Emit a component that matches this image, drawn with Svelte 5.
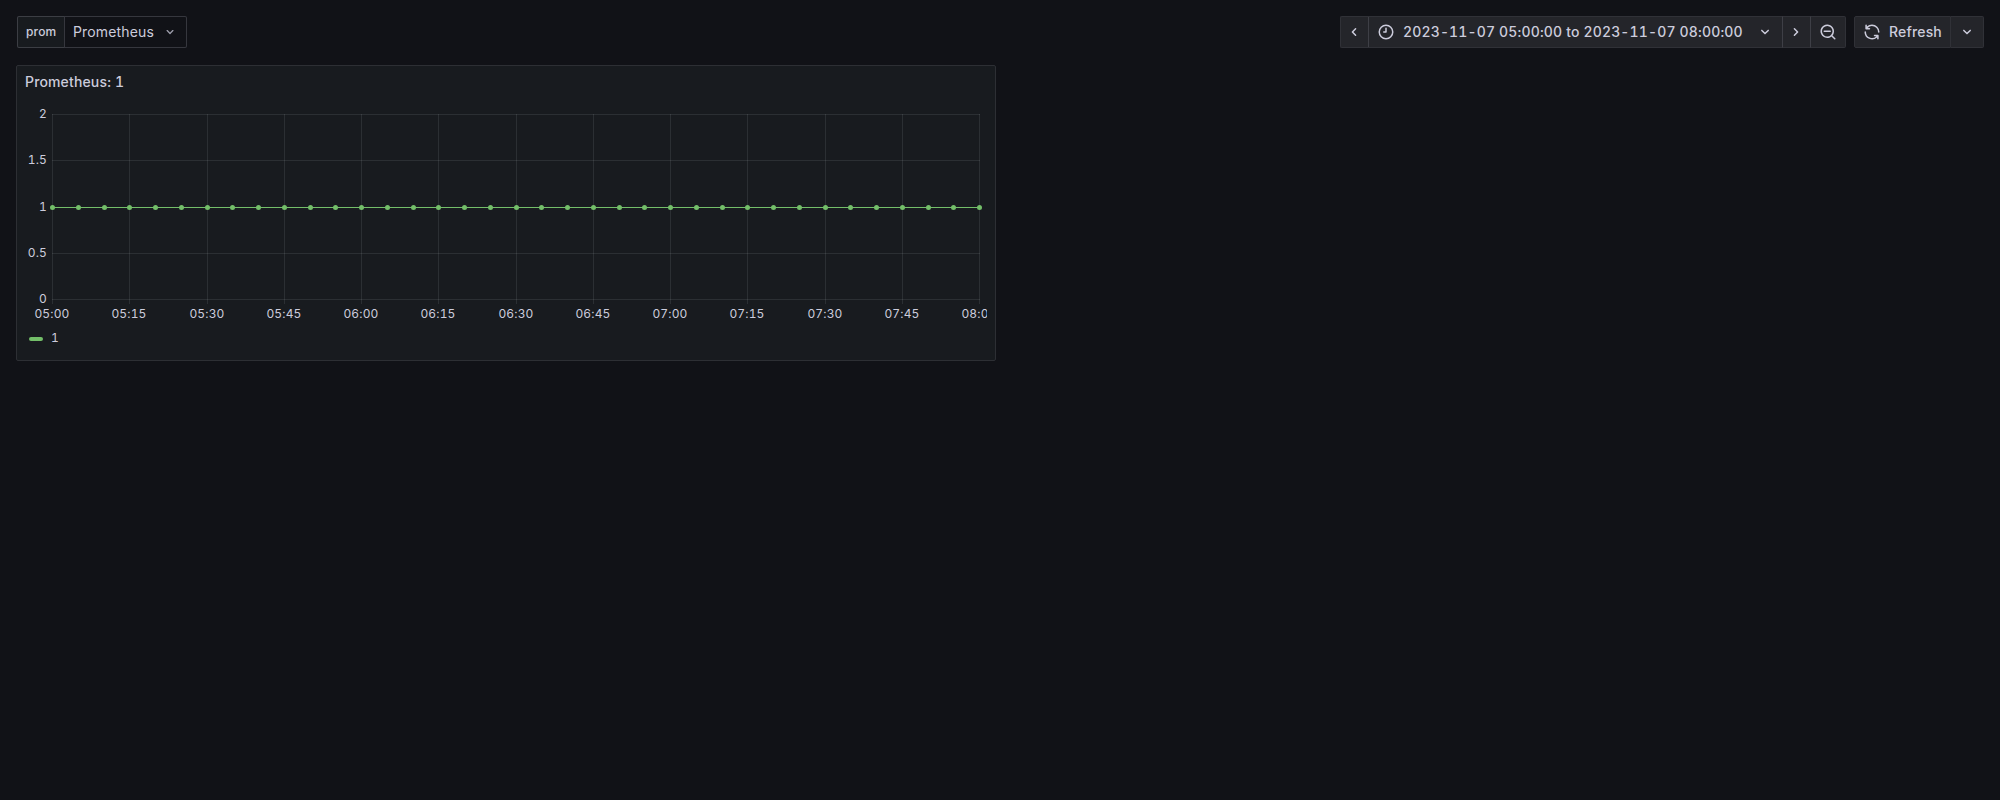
<script>
  const icons = {
    down: 'M17,9.17a1,1,0,0,0-1.41,0L12,12.71,8.46,9.17a1,1,0,0,0-1.41,0,1,1,0,0,0,0,1.42l4.24,4.24a1,1,0,0,0,1.42,0L17,10.59A1,1,0,0,0,17,9.17Z',
    left: 'M11.29,12l3.54-3.54a1,1,0,0,0,0-1.41,1,1,0,0,0-1.42,0L9.17,11.29a1,1,0,0,0,0,1.42L13.41,17a1,1,0,0,0,.71.29,1,1,0,0,0,.71-.29,1,1,0,0,0,0-1.41Z',
    right: 'M14.83,11.29,10.59,7.05a1,1,0,0,0-1.42,0,1,1,0,0,0,0,1.41L12.71,12,9.17,15.54a1,1,0,0,0,0,1.41,1,1,0,0,0,.71.29,1,1,0,0,0,.71-.29l4.24-4.24A1,1,0,0,0,14.83,11.29Z',
    clock: 'M12,2A10,10,0,1,0,22,12,10,10,0,0,0,12,2Zm0,18a8,8,0,1,1,8-8A8,8,0,0,1,12,20ZM12,6a1,1,0,0,0-1,1v4H9a1,1,0,0,0,0,2h3a1,1,0,0,0,1-1V7A1,1,0,0,0,12,6Z',
    zoomOut: 'M21.71,20.29,18,16.61A9,9,0,1,0,16.61,18l3.68,3.68a1,1,0,0,0,1.42,0A1,1,0,0,0,21.71,20.29ZM11,18a7,7,0,1,1,7-7A7,7,0,0,1,11,18Zm4-8H7a1,1,0,0,0,0,2h8a1,1,0,0,0,0-2Z',
    sync: 'M19.91,15.51H15.38a1,1,0,0,0,0,2h2.4A8,8,0,0,1,4,12a1,1,0,1,0-2,0,10,10,0,0,0,16.88,7.23V21a1,1,0,0,0,2,0V16.5A1,1,0,0,0,19.91,15.51ZM12,2A10,10,0,0,0,5.12,4.77V3a1,1,0,0,0-2,0V7.5a1,1,0,0,0,1,1h4.5a1,1,0,0,0,0-2H6.22A8,8,0,0,1,20,12a1,1,0,0,0,2,0A10,10,0,0,0,12,2Z'
  };

  // Plot area, in the chart's own pixels
  const left = 27;
  const width = 927;
  const top = 17;
  const height = 185;

  const xTicks = Array.from({ length: 13 }, (_, i) => {
    const minutes = 300 + i * 15;
    const label = `${String(Math.floor(minutes / 60)).padStart(2, '0')}:${String(minutes % 60).padStart(2, '0')}`;
    return { x: left + Math.round((width * i) / 12), label };
  });
  const yTicks = [2, 1.5, 1, 0.5, 0].map((value) => ({
    value,
    y: top + Math.floor(height * (1 - value / 2) + 0.5)
  }));
  const points = Array.from({ length: 37 }, (_, i) => left + Math.round((width * i) / 36));
  const lineY = yTicks[2].y;
</script>

{#snippet icon(name, size)}
  <svg class="icon" viewBox="0 0 24 24" width={size} height={size} aria-hidden="true"><path d={icons[name]} /></svg>
{/snippet}

<div class="dashboard">
  <header class="controls">
    <div class="variable">
      <label class="variable-label" for="prom">prom</label>
      <button class="select" id="prom"><span>Prometheus</span>{@render icon('down', 16)}</button>
    </div>
    <div class="toolbar">
      <div class="group">
        <button class="btn back" aria-label="Move time range backwards">{@render icon('left', 18)}</button>
        <button class="btn range">
          {@render icon('clock', 18)}
          <span class="range-text">2023-11-07 05:00:00 to 2023-11-07 08:00:00</span>
          {@render icon('down', 18)}
        </button>
        <button class="btn forward" aria-label="Move time range forwards">{@render icon('right', 18)}</button>
        <button class="btn zoom" aria-label="Zoom out time range">{@render icon('zoomOut', 18)}</button>
      </div>
      <div class="group">
        <button class="btn refresh">{@render icon('sync', 18)}<span>Refresh</span></button>
        <button class="btn interval" aria-label="Auto refresh interval">{@render icon('down', 18)}</button>
      </div>
    </div>
  </header>

  <section class="panel">
    <h2>Prometheus: 1</h2>
    <svg class="chart" width="962" height="225">
      <g class="grid">
        {#each xTicks as tick}
          <rect x={tick.x} y={top} width="1" height={height + 5} />
        {/each}
        {#each yTicks as tick}
          <rect x={left} y={tick.y} width={width + 1} height="1" />
        {/each}
      </g>
      <g class="y-labels">
        {#each yTicks as tick}
          <text x={left - 5} y={tick.y + 4}>{tick.value}</text>
        {/each}
      </g>
      <g class="x-labels">
        {#each xTicks as tick}
          <text x={tick.x} y="221">{tick.label}</text>
        {/each}
      </g>
      <g class="series">
        <rect x={left} y={lineY} width={width} height="1" />
        {#each points as x}
          <circle cx={x + 0.5} cy={lineY + 0.5} r="2.5" />
        {/each}
      </g>
    </svg>
    <div class="legend"><i></i><span>1</span></div>
  </section>
</div>

<style>
  :global(body) {
    background: #111217;
  }
  .dashboard {
    box-sizing: border-box;
    height: 800px;
    padding: 16px;
    background: #111217;
    color: rgb(204, 204, 220);
    font: 400 14px/22px Inter, sans-serif;
    letter-spacing: 0.15px;
    font-variant-numeric: tabular-nums;
  }
  .controls {
    display: flex;
    justify-content: space-between;
    height: 32px;
    padding-left: 1px;
    margin-bottom: 17px;
  }
  .variable,
  .toolbar,
  .group {
    display: flex;
  }
  .toolbar {
    gap: 8px;
  }
  .variable-label {
    box-sizing: border-box;
    width: 47px;
    padding: 0 8px;
    border: 1px solid rgba(204, 204, 220, 0.2);
    border-right: 0;
    border-radius: 2px 0 0 2px;
    background: #181b1f;
    font-size: 12px;
    font-weight: 500;
    line-height: 30px;
  }
  button {
    box-sizing: border-box;
    display: flex;
    align-items: center;
    height: 32px;
    margin: 0;
    padding: 0;
    color: inherit;
    font: inherit;
    letter-spacing: inherit;
    font-variant-numeric: inherit;
    white-space: nowrap;
  }
  .select {
    justify-content: space-between;
    width: 123px;
    padding: 0 8px;
    border: 1px solid rgba(204, 204, 220, 0.2);
    border-radius: 0 2px 2px 0;
    background: #111217;
  }
  .select .icon {
    opacity: 0.75;
  }
  .icon {
    display: block;
    flex: none;
    fill: currentColor;
  }
  .btn {
    justify-content: center;
    border: 1px solid #303137;
    border-left-width: 0;
    background: #24252a;
    font-weight: 500;
  }
  .group .btn:first-child {
    border-left-width: 1px;
    border-radius: 2px 0 0 2px;
  }
  .group .btn:last-child {
    border-radius: 0 2px 2px 0;
  }
  .back {
    width: 29px;
    padding-right: 1px;
    border-right-color: #3e3f46;
  }
  .range {
    justify-content: flex-start;
    width: 414px;
    padding-left: 8px;
    border-right-color: #3e3f46;
  }
  .range-text {
    flex: 1;
    padding-left: 8px;
    text-align: left;
  }
  .range > .icon:last-child {
    margin-right: 8px;
  }
  .forward {
    width: 28px;
    padding-right: 1px;
    border-right-color: #3e3f46;
  }
  .zoom {
    width: 35px;
  }
  .refresh {
    width: 97px;
    gap: 8px;
  }
  .interval {
    width: 33px;
  }
  .panel {
    box-sizing: border-box;
    width: 980px;
    height: 296px;
    padding: 0 8px;
    border: 1px solid #2d2f34;
    border-radius: 2px;
    background: #181b1f;
  }
  h2 {
    margin: 0;
    font-size: 14px;
    font-weight: 500;
    line-height: 31px;
  }
  .chart {
    display: block;
    overflow: hidden;
  }
  .grid {
    fill: rgba(240, 250, 255, 0.09);
  }
  .chart text {
    fill: rgb(204, 204, 220);
    font-size: 12px;
  }
  .y-labels {
    text-anchor: end;
  }
  .x-labels {
    text-anchor: middle;
  }
  .series {
    fill: #73bf69;
  }
  .legend {
    display: flex;
    align-items: center;
    gap: 8px;
    height: 32px;
    padding-left: 4px;
    font-size: 12px;
  }
  .legend i {
    width: 14px;
    height: 4px;
    margin-top: 2px;
    border-radius: 2px;
    background: #73bf69;
  }
</style>
